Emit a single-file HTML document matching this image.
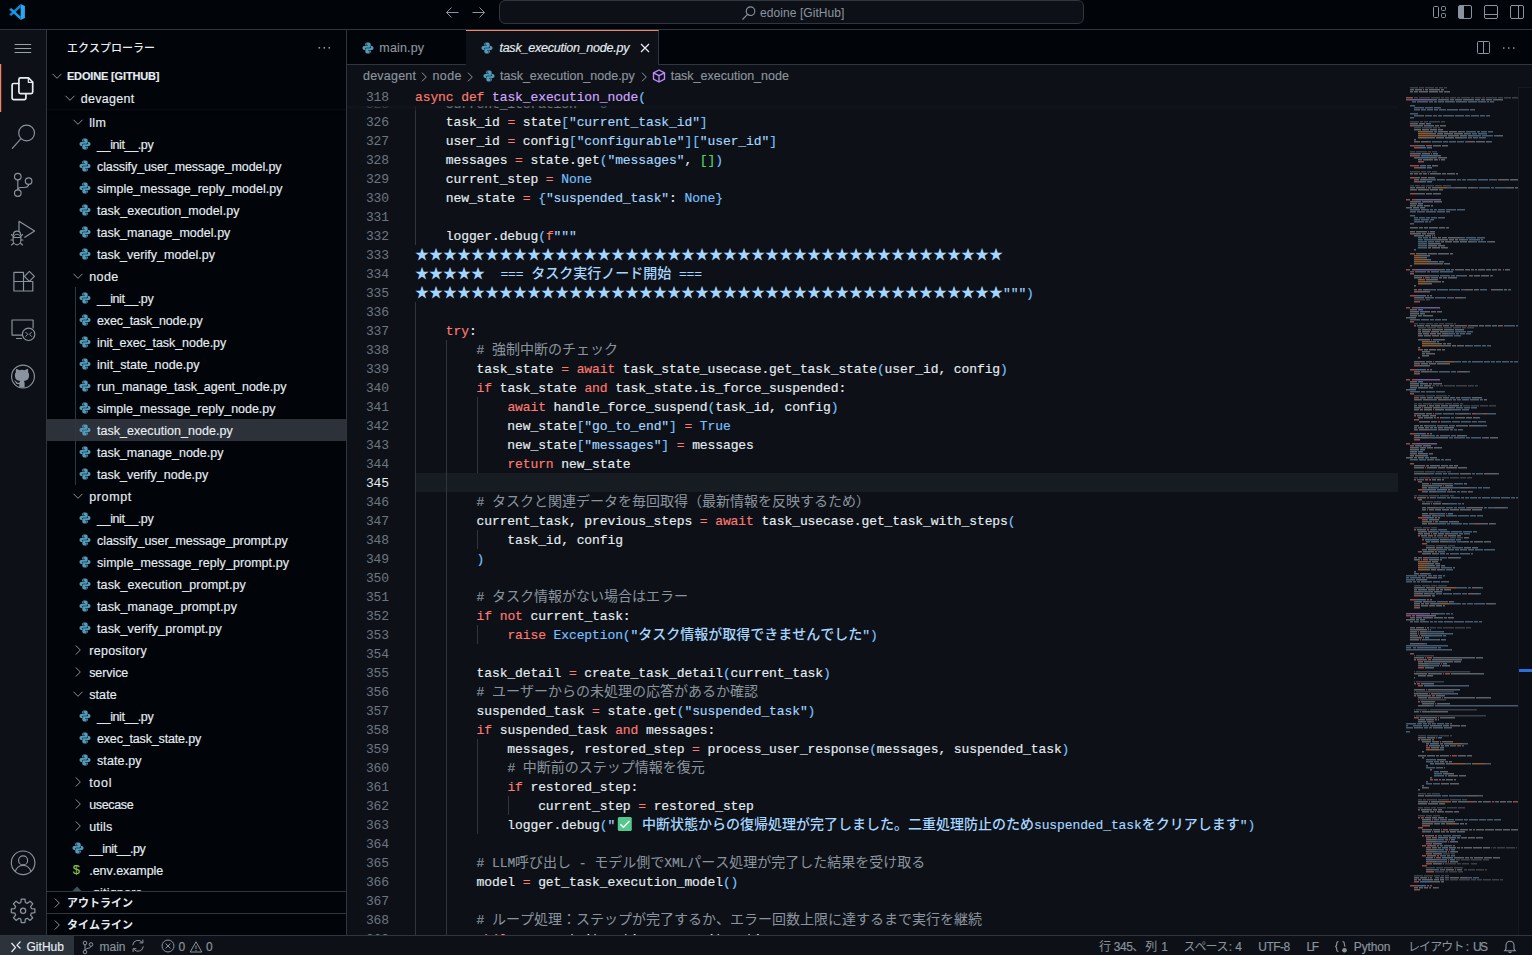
<!DOCTYPE html><html><head><meta charset="utf-8"><title>VS Code</title><style>
*{box-sizing:border-box;margin:0;padding:0}
html,body{width:1532px;height:955px;overflow:hidden;background:#0d1117}
body{font-family:"Liberation Sans",sans-serif;font-size:13px;color:#e6edf3;position:relative;font-kerning:none;-webkit-font-smoothing:antialiased}
.abs{position:absolute}
svg{display:block}
svg.jp{display:inline-block;vertical-align:top;overflow:visible}
span.jp{font-family:"Liberation Sans","Noto Sans CJK JP",sans-serif;font-size:14px;letter-spacing:0;line-height:0;white-space:nowrap;-webkit-text-stroke:0;font-style:normal}
span.jm{font-weight:500}
span.jr{font-weight:400}
span.jb{font-weight:700}
#title{position:absolute;left:0;top:0;width:1532px;height:29px;background:#010409}
#titleb{position:absolute;left:0;top:29px;width:1532px;height:1px;background:#30363d}
#act{position:absolute;left:0;top:30px;width:46px;height:905px;background:#0d1117}
#actb{position:absolute;left:46px;top:30px;width:1px;height:905px;background:#30363d}
#side{position:absolute;left:47px;top:30px;width:299px;height:905px;background:#010409;overflow:hidden}
#sideb{position:absolute;left:346px;top:30px;width:1px;height:905px;background:#30363d}
#ed{position:absolute;left:347px;top:30px;width:1185px;height:905px;background:#0d1117;overflow:hidden}
#status{position:absolute;left:0;top:935px;width:1532px;height:22px;background:#0d1117;border-top:1px solid #30363d;color:#8b949e;font-size:12px}
.row{position:absolute;left:0;width:299px;height:22px;line-height:22px;white-space:nowrap}
.row span.t{position:absolute;top:0}
.code{position:absolute;left:68px;height:19px;line-height:19px;white-space:pre;font-family:"Liberation Mono",monospace;font-size:13px;letter-spacing:-0.104px;color:#e6edf3;-webkit-text-stroke:0.15px}
.ln{position:absolute;left:-1px;width:43px;text-align:right;height:19px;line-height:19px;font-family:"Liberation Mono",monospace;font-size:13px;letter-spacing:-0.104px;color:#6e7681}
.k{color:#ff7b72}.f{color:#d2a8ff}.s{color:#a5d6ff}.c{color:#79c0ff}.m{color:#8b949e}.b1{color:#79c0ff}.b2{color:#56d364}.b3{color:#e3b341}
.guide{position:absolute;width:1px;background:#30363d}
</style></head><body><svg width="0" height="0" style="position:absolute"><defs><g id="py"><path fill-rule="evenodd" fill="#519aba" d="M5.900 .5C4.100 .5 3.100 1.100 3.100 2.300V3.500H5.900V4H2.200C1.100 4 .5 4.900 .5 6C.5 7.200 1.100 8 2.200 8H3V7C3 6.200 3.600 5.650 4.400 5.650H7.400C8.200 5.650 8.700 5.100 8.700 4.300V2.300C8.700 1.100 7.700 .5 5.900 .5ZM4.400 1.400a.6 .6 0 1 1 0 1.200a.6 .6 0 0 1 0-1.200ZM6.100 11.500C7.900 11.500 8.900 10.900 8.900 9.700V8.500H6.100V8H9.800C10.900 8 11.500 7.100 11.500 6C11.500 4.800 10.900 4 9.800 4H9V5C9 5.800 8.400 6.350 7.600 6.350H4.600C3.800 6.350 3.300 6.900 3.300 7.700V9.700C3.300 10.900 4.300 11.500 6.100 11.500ZM7.600 9.400a.6 .6 0 1 1 0 1.200a.6 .6 0 0 1 0-1.200Z"/></g></defs></svg><div id="title"><svg class="abs" style="left:8px;top:3px" width="18" height="18" viewBox="0 0 18 18">
<path d="M12.6 0.9 L16.9 2.9 L16.9 15.1 L12.6 17.1 Z" fill="#29a9f2"/>
<path d="M12.6 0.9 L12.6 4.6 L3.2 12.9 L1.2 11.4 Z" fill="#0a8ad8"/>
<path d="M12.6 17.1 L12.6 13.4 L3.2 5.1 L1.2 6.6 Z" fill="#1a9be6"/>
</svg><svg class="abs" style="left:444px;top:4px" width="44" height="16" viewBox="0 0 44 16" fill="none" stroke="#8b949e" stroke-width="1">
<path d="M14.5 8.5H2.5M7.500 3.500L2.500 8.500L7.500 13.500"/><path d="M28.5 8.5H40.5M35.500 3.500L40.500 8.500L35.500 13.500"/></svg><div class="abs" style="left:499px;top:0px;width:585px;height:24px;border:1px solid #30363d;border-radius:6px;background:#0d1117"></div><svg class="abs" style="left:741px;top:5px" width="16" height="16" viewBox="0 0 16 16" fill="none" stroke="#8b949e" stroke-width="1.1"><circle cx="9.5" cy="6.2" r="4.3"/><path d="M6.5 9.3L1.5 14.5"/></svg><div class="abs" style="left:760px;top:2px;height:22px;line-height:22px;font-size:12px;color:#8b949e;letter-spacing:0.074px">edoine [GitHub]</div><svg class="abs" style="left:1430px;top:3px" width="100" height="20" viewBox="1430 3 100 20" fill="none" stroke="#8b949e" stroke-width="1">
<rect x="1433.5" y="6.5" width="5" height="11" rx="1"/><rect x="1441.5" y="6.5" width="4" height="4" rx="1"/><rect x="1441.5" y="13.5" width="4" height="4" rx="1"/>
<rect x="1458.5" y="5.5" width="13" height="13" rx="1.5"/><path d="M1459 6h5v12h-5z" fill="#8b949e" stroke="none"/>
<rect x="1484.5" y="5.5" width="13" height="13" rx="1.5"/><path d="M1485 14.5h12"/>
<rect x="1510.500" y="5.5" width="13" height="13" rx="1.5"/><path d="M1518.5 6v12"/>
</svg></div><div id="titleb"></div><div id="act"><svg class="abs" style="left:0;top:0" width="46" height="905" viewBox="0 30 46 905" fill="none" stroke="#8b949e" stroke-width="1.15" stroke-linecap="round" stroke-linejoin="round">
<rect x="0" y="64" width="1.2" height="48" fill="#f78166" stroke="none"/>
<path d="M14.600 44.500h16.600M14.600 48.500h16.600M14.600 52.500h16.600" stroke-width="1" stroke-linecap="butt" stroke="#9aa1a9"/>
<!-- files -->
<g stroke="#e6edf3" stroke-width="1.7">
<path d="M20.5 77.8h8l4.2 4.2v10a1.6 1.6 0 0 1 -1.600 1.6h-10.600a1.600 1.600 0 0 1 -1.600 -1.600v-12.600a1.600 1.600 0 0 1 1.600 -1.600z"/>
<path d="M28.300 78v4.300h4.300" stroke-width="1.2"/>
<path d="M18.700 83.500h-5a1.600 1.600 0 0 0 -1.600 1.600v13a1.600 1.600 0 0 0 1.600 1.600h10.600a1.600 1.600 0 0 0 1.600 -1.600v-4.300"/>
</g>
<!-- search -->
<circle cx="26.6" cy="133" r="7.900"/><path d="M20.800 138.800L12.300 148.300"/>
<!-- scm -->
<circle cx="17.800" cy="176.600" r="3.300"/><circle cx="28.600" cy="181.100" r="3.300"/><circle cx="17.800" cy="193.100" r="3.300"/>
<path d="M17.800 180v9.800M28.600 184.500c0 2.500 -2.500 3 -5 3h-2.500c-2 0 -3.300 .8 -3.300 2.300"/>
<!-- debug -->
<path d="M19 231.500V221.300L34.600 231.100L24.800 237.300"/>
<ellipse cx="17" cy="239.500" rx="4" ry="5.300"/><path d="M13 237.500h8M11.500 234.500l2 2M22.500 234.500l-2 2M11 240h2M21 240h2M11.500 245l2 -1.800M22.500 245l-2 -1.800M13.500 234.600a3.500 3.500 0 0 1 7 0"/>
<!-- extensions -->
<path d="M23.500 281.500v9.500h-9.600v-18.700h9.600v9.200h9.300v9.500h-9.300M13.900 281.500h9.600"/>
<path d="M29.400 271.300l5 5l-5 5l-5 -5z"/>
<!-- remote -->
<path d="M22 335.100h-10v-15.100h21.100v8"/><path d="M16.500 338.500h5"/>
<circle cx="28.600" cy="334.300" r="6.200"/><path d="M25.800 332.300l2 2l-2 2M31.400 332.300l-2 2l2 2" stroke-width="1"/>
<!-- github -->
<circle cx="23" cy="376.500" r="11.400"/>
<path d="M19.300 387.300v-3.200c-3 .7 -3.600 -1.400 -3.600 -1.400c-.5 -1.200 -1.200 -1.600 -1.200 -1.600c-1 -.7 .1 -.7 .1 -.7c1.100 .1 1.700 1.100 1.700 1.100c1 1.700 2.600 1.200 3.200 .9c.1 -.7 .4 -1.200 .7 -1.500c-2.600 -.3 -5.300 -1.300 -5.300 -5.700c0 -1.300 .4 -2.300 1.100 -3.100c-.1 -.3 -.5 -1.500 .1 -3.100c0 0 .9 -.3 3.100 1.200a10.600 10.600 0 0 1 5.600 0c2.200 -1.500 3.100 -1.200 3.100 -1.200c.6 1.600 .2 2.800 .1 3.100c.7 .8 1.100 1.800 1.100 3.100c0 4.400 -2.700 5.400 -5.300 5.700c.4 .4 .8 1.100 .8 2.200v4.200z" fill="#8b949e" stroke="none"/>
<!-- account -->
<circle cx="23.100" cy="862.800" r="11.800"/><circle cx="23.100" cy="860.400" r="4.500"/><path d="M15.300 871.600a8 8 0 0 1 15.600 0"/>
<!-- gear -->
<g transform="translate(23.100 910.800)" stroke-width="1.250">
<path d="M-2.27 -8.30L-1.86 -11.75L1.86 -11.75L2.27 -8.30L4.26 -7.47L6.99 -9.63L9.63 -6.99L7.47 -4.26L8.30 -2.27L11.75 -1.86L11.75 1.86L8.30 2.27L7.47 4.26L9.63 6.99L6.99 9.63L4.26 7.47L2.27 8.30L1.86 11.75L-1.86 11.75L-2.27 8.30L-4.26 7.47L-6.99 9.63L-9.63 6.99L-7.47 4.26L-8.30 2.27L-11.75 1.86L-11.75 -1.86L-8.30 -2.27L-7.47 -4.26L-9.63 -6.99L-6.99 -9.63L-4.26 -7.47Z"/>
<circle r="2.600"/>
</g>
</svg></div><div id="actb"></div><div id="side"><div class="abs" style="left:20px;top:10px;height:16px;line-height:16px;white-space:nowrap"><span class="jp jm" style="font-size:11px;color:#e6edf3">エクスプローラー</span></div><svg class="abs" style="left:270px;top:14px" width="16" height="8" viewBox="0 0 16 8" fill="#8b949e"><rect x="1.5" y="3" width="1.600" height="1.600"/><rect x="6.500" y="3" width="1.600" height="1.600"/><rect x="11.500" y="3" width="1.600" height="1.600"/></svg><div class="abs" style="left:0;top:389px;width:299px;height:22px;background:#2d3139"></div><div class="abs" style="left:28px;top:257px;width:1px;height:198px;background:#30363d"></div><svg class="abs" style="left:25px;top:86px" width="12" height="12" viewBox="-6 -6 12 12" fill="none" stroke="#8b949e" stroke-width="1"><path d="M-4.500 -2.200L0 2.300L4.500 -2.200"/></svg><div class="abs" style="left:42.2px;top:81.7px;height:22px;line-height:22px;white-space:nowrap;font-size:12.5px;color:#e6edf3;letter-spacing:0.378px;-webkit-text-stroke:0.15px;">llm</div><svg class="abs" style="left:32.400000000000006px;top:108px" width="12" height="12" viewBox="0 0 12 12"><use href="#py"/></svg><div class="abs" style="left:50px;top:103.7px;height:22px;line-height:22px;white-space:nowrap;font-size:12.5px;color:#e6edf3;letter-spacing:-0.378px;-webkit-text-stroke:0.15px;">__init__.py</div><svg class="abs" style="left:32.400000000000006px;top:130px" width="12" height="12" viewBox="0 0 12 12"><use href="#py"/></svg><div class="abs" style="left:50px;top:125.7px;height:22px;line-height:22px;white-space:nowrap;font-size:12.5px;color:#e6edf3;letter-spacing:-0.106px;-webkit-text-stroke:0.15px;">classify_user_message_model.py</div><svg class="abs" style="left:32.400000000000006px;top:152px" width="12" height="12" viewBox="0 0 12 12"><use href="#py"/></svg><div class="abs" style="left:50px;top:147.7px;height:22px;line-height:22px;white-space:nowrap;font-size:12.5px;color:#e6edf3;letter-spacing:-0.004px;-webkit-text-stroke:0.15px;">simple_message_reply_model.py</div><svg class="abs" style="left:32.400000000000006px;top:174px" width="12" height="12" viewBox="0 0 12 12"><use href="#py"/></svg><div class="abs" style="left:50px;top:169.7px;height:22px;line-height:22px;white-space:nowrap;font-size:12.5px;color:#e6edf3;letter-spacing:0.063px;-webkit-text-stroke:0.15px;">task_execution_model.py</div><svg class="abs" style="left:32.400000000000006px;top:196px" width="12" height="12" viewBox="0 0 12 12"><use href="#py"/></svg><div class="abs" style="left:50px;top:191.7px;height:22px;line-height:22px;white-space:nowrap;font-size:12.5px;color:#e6edf3;letter-spacing:0.034px;-webkit-text-stroke:0.15px;">task_manage_model.py</div><svg class="abs" style="left:32.400000000000006px;top:218px" width="12" height="12" viewBox="0 0 12 12"><use href="#py"/></svg><div class="abs" style="left:50px;top:213.7px;height:22px;line-height:22px;white-space:nowrap;font-size:12.5px;color:#e6edf3;letter-spacing:0.034px;-webkit-text-stroke:0.15px;">task_verify_model.py</div><svg class="abs" style="left:25px;top:240px" width="12" height="12" viewBox="-6 -6 12 12" fill="none" stroke="#8b949e" stroke-width="1"><path d="M-4.500 -2.200L0 2.300L4.500 -2.200"/></svg><div class="abs" style="left:42.2px;top:235.7px;height:22px;line-height:22px;white-space:nowrap;font-size:12.5px;color:#e6edf3;letter-spacing:0.398px;-webkit-text-stroke:0.15px;">node</div><svg class="abs" style="left:32.400000000000006px;top:262px" width="12" height="12" viewBox="0 0 12 12"><use href="#py"/></svg><div class="abs" style="left:50px;top:257.7px;height:22px;line-height:22px;white-space:nowrap;font-size:12.5px;color:#e6edf3;letter-spacing:-0.378px;-webkit-text-stroke:0.15px;">__init__.py</div><svg class="abs" style="left:32.400000000000006px;top:284px" width="12" height="12" viewBox="0 0 12 12"><use href="#py"/></svg><div class="abs" style="left:50px;top:279.7px;height:22px;line-height:22px;white-space:nowrap;font-size:12.5px;color:#e6edf3;letter-spacing:-0.130px;-webkit-text-stroke:0.15px;">exec_task_node.py</div><svg class="abs" style="left:32.400000000000006px;top:306px" width="12" height="12" viewBox="0 0 12 12"><use href="#py"/></svg><div class="abs" style="left:50px;top:301.7px;height:22px;line-height:22px;white-space:nowrap;font-size:12.5px;color:#e6edf3;letter-spacing:-0.070px;-webkit-text-stroke:0.15px;">init_exec_task_node.py</div><svg class="abs" style="left:32.400000000000006px;top:328px" width="12" height="12" viewBox="0 0 12 12"><use href="#py"/></svg><div class="abs" style="left:50px;top:323.7px;height:22px;line-height:22px;white-space:nowrap;font-size:12.5px;color:#e6edf3;letter-spacing:0.058px;-webkit-text-stroke:0.15px;">init_state_node.py</div><svg class="abs" style="left:32.400000000000006px;top:350px" width="12" height="12" viewBox="0 0 12 12"><use href="#py"/></svg><div class="abs" style="left:50px;top:345.7px;height:22px;line-height:22px;white-space:nowrap;font-size:12.5px;color:#e6edf3;letter-spacing:-0.012px;-webkit-text-stroke:0.15px;">run_manage_task_agent_node.py</div><svg class="abs" style="left:32.400000000000006px;top:372px" width="12" height="12" viewBox="0 0 12 12"><use href="#py"/></svg><div class="abs" style="left:50px;top:367.7px;height:22px;line-height:22px;white-space:nowrap;font-size:12.5px;color:#e6edf3;letter-spacing:-0.031px;-webkit-text-stroke:0.15px;">simple_message_reply_node.py</div><svg class="abs" style="left:32.400000000000006px;top:394px" width="12" height="12" viewBox="0 0 12 12"><use href="#py"/></svg><div class="abs" style="left:50px;top:389.7px;height:22px;line-height:22px;white-space:nowrap;font-size:12.5px;color:#e6edf3;letter-spacing:0.040px;-webkit-text-stroke:0.15px;">task_execution_node.py</div><svg class="abs" style="left:32.400000000000006px;top:416px" width="12" height="12" viewBox="0 0 12 12"><use href="#py"/></svg><div class="abs" style="left:50px;top:411.7px;height:22px;line-height:22px;white-space:nowrap;font-size:12.5px;color:#e6edf3;letter-spacing:-0.004px;-webkit-text-stroke:0.15px;">task_manage_node.py</div><svg class="abs" style="left:32.400000000000006px;top:438px" width="12" height="12" viewBox="0 0 12 12"><use href="#py"/></svg><div class="abs" style="left:50px;top:433.7px;height:22px;line-height:22px;white-space:nowrap;font-size:12.5px;color:#e6edf3;letter-spacing:0.007px;-webkit-text-stroke:0.15px;">task_verify_node.py</div><svg class="abs" style="left:25px;top:460px" width="12" height="12" viewBox="-6 -6 12 12" fill="none" stroke="#8b949e" stroke-width="1"><path d="M-4.500 -2.200L0 2.300L4.500 -2.200"/></svg><div class="abs" style="left:42.2px;top:455.7px;height:22px;line-height:22px;white-space:nowrap;font-size:12.5px;color:#e6edf3;letter-spacing:0.633px;-webkit-text-stroke:0.15px;">prompt</div><svg class="abs" style="left:32.400000000000006px;top:482px" width="12" height="12" viewBox="0 0 12 12"><use href="#py"/></svg><div class="abs" style="left:50px;top:477.7px;height:22px;line-height:22px;white-space:nowrap;font-size:12.5px;color:#e6edf3;letter-spacing:-0.378px;-webkit-text-stroke:0.15px;">__init__.py</div><svg class="abs" style="left:32.400000000000006px;top:504px" width="12" height="12" viewBox="0 0 12 12"><use href="#py"/></svg><div class="abs" style="left:50px;top:499.7px;height:22px;line-height:22px;white-space:nowrap;font-size:12.5px;color:#e6edf3;letter-spacing:-0.056px;-webkit-text-stroke:0.15px;">classify_user_message_prompt.py</div><svg class="abs" style="left:32.400000000000006px;top:526px" width="12" height="12" viewBox="0 0 12 12"><use href="#py"/></svg><div class="abs" style="left:50px;top:521.7px;height:22px;line-height:22px;white-space:nowrap;font-size:12.5px;color:#e6edf3;letter-spacing:0.054px;-webkit-text-stroke:0.15px;">simple_message_reply_prompt.py</div><svg class="abs" style="left:32.400000000000006px;top:548px" width="12" height="12" viewBox="0 0 12 12"><use href="#py"/></svg><div class="abs" style="left:50px;top:543.7px;height:22px;line-height:22px;white-space:nowrap;font-size:12.5px;color:#e6edf3;letter-spacing:0.128px;-webkit-text-stroke:0.15px;">task_execution_prompt.py</div><svg class="abs" style="left:32.400000000000006px;top:570px" width="12" height="12" viewBox="0 0 12 12"><use href="#py"/></svg><div class="abs" style="left:50px;top:565.7px;height:22px;line-height:22px;white-space:nowrap;font-size:12.5px;color:#e6edf3;letter-spacing:0.115px;-webkit-text-stroke:0.15px;">task_manage_prompt.py</div><svg class="abs" style="left:32.400000000000006px;top:592px" width="12" height="12" viewBox="0 0 12 12"><use href="#py"/></svg><div class="abs" style="left:50px;top:587.7px;height:22px;line-height:22px;white-space:nowrap;font-size:12.5px;color:#e6edf3;letter-spacing:0.125px;-webkit-text-stroke:0.15px;">task_verify_prompt.py</div><svg class="abs" style="left:25px;top:614px" width="12" height="12" viewBox="-6 -6 12 12" fill="none" stroke="#8b949e" stroke-width="1"><path d="M-2.200 -4.500L2.300 0L-2.200 4.500"/></svg><div class="abs" style="left:42.2px;top:609.7px;height:22px;line-height:22px;white-space:nowrap;font-size:12.5px;color:#e6edf3;letter-spacing:0.292px;-webkit-text-stroke:0.15px;">repository</div><svg class="abs" style="left:25px;top:636px" width="12" height="12" viewBox="-6 -6 12 12" fill="none" stroke="#8b949e" stroke-width="1"><path d="M-2.200 -4.500L2.300 0L-2.200 4.500"/></svg><div class="abs" style="left:42.2px;top:631.7px;height:22px;line-height:22px;white-space:nowrap;font-size:12.5px;color:#e6edf3;letter-spacing:-0.085px;-webkit-text-stroke:0.15px;">service</div><svg class="abs" style="left:25px;top:658px" width="12" height="12" viewBox="-6 -6 12 12" fill="none" stroke="#8b949e" stroke-width="1"><path d="M-4.500 -2.200L0 2.300L4.500 -2.200"/></svg><div class="abs" style="left:42.2px;top:653.7px;height:22px;line-height:22px;white-space:nowrap;font-size:12.5px;color:#e6edf3;letter-spacing:0.100px;-webkit-text-stroke:0.15px;">state</div><svg class="abs" style="left:32.400000000000006px;top:680px" width="12" height="12" viewBox="0 0 12 12"><use href="#py"/></svg><div class="abs" style="left:50px;top:675.7px;height:22px;line-height:22px;white-space:nowrap;font-size:12.5px;color:#e6edf3;letter-spacing:-0.378px;-webkit-text-stroke:0.15px;">__init__.py</div><svg class="abs" style="left:32.400000000000006px;top:702px" width="12" height="12" viewBox="0 0 12 12"><use href="#py"/></svg><div class="abs" style="left:50px;top:697.7px;height:22px;line-height:22px;white-space:nowrap;font-size:12.5px;color:#e6edf3;letter-spacing:-0.167px;-webkit-text-stroke:0.15px;">exec_task_state.py</div><svg class="abs" style="left:32.400000000000006px;top:724px" width="12" height="12" viewBox="0 0 12 12"><use href="#py"/></svg><div class="abs" style="left:50px;top:719.7px;height:22px;line-height:22px;white-space:nowrap;font-size:12.5px;color:#e6edf3;letter-spacing:0.116px;-webkit-text-stroke:0.15px;">state.py</div><svg class="abs" style="left:25px;top:746px" width="12" height="12" viewBox="-6 -6 12 12" fill="none" stroke="#8b949e" stroke-width="1"><path d="M-2.200 -4.500L2.300 0L-2.200 4.500"/></svg><div class="abs" style="left:42.2px;top:741.7px;height:22px;line-height:22px;white-space:nowrap;font-size:12.5px;color:#e6edf3;letter-spacing:0.687px;-webkit-text-stroke:0.15px;">tool</div><svg class="abs" style="left:25px;top:768px" width="12" height="12" viewBox="-6 -6 12 12" fill="none" stroke="#8b949e" stroke-width="1"><path d="M-2.200 -4.500L2.300 0L-2.200 4.500"/></svg><div class="abs" style="left:42.2px;top:763.7px;height:22px;line-height:22px;white-space:nowrap;font-size:12.5px;color:#e6edf3;letter-spacing:-0.337px;-webkit-text-stroke:0.15px;">usecase</div><svg class="abs" style="left:25px;top:790px" width="12" height="12" viewBox="-6 -6 12 12" fill="none" stroke="#8b949e" stroke-width="1"><path d="M-2.200 -4.500L2.300 0L-2.200 4.500"/></svg><div class="abs" style="left:42.2px;top:785.7px;height:22px;line-height:22px;white-space:nowrap;font-size:12.5px;color:#e6edf3;letter-spacing:0.234px;-webkit-text-stroke:0.15px;">utils</div><svg class="abs" style="left:24.5px;top:812px" width="12" height="12" viewBox="0 0 12 12"><use href="#py"/></svg><div class="abs" style="left:42.2px;top:807.7px;height:22px;line-height:22px;white-space:nowrap;font-size:12.5px;color:#e6edf3;letter-spacing:-0.378px;-webkit-text-stroke:0.15px;">__init__.py</div><div class="abs" style="left:25.799999999999997px;top:829px;height:22px;line-height:22px;white-space:nowrap;font-size:13px;color:#8dc149;letter-spacing:-0.030px;-webkit-text-stroke:0.15px;">$</div><div class="abs" style="left:42.2px;top:829.7px;height:22px;line-height:22px;white-space:nowrap;font-size:12.5px;color:#e6edf3;letter-spacing:-0.021px;-webkit-text-stroke:0.15px;">.env.example</div><svg class="abs" style="left:24px;top:856px" width="12" height="12" viewBox="0 0 12 12"><path d="M6 0.500L11.500 6L6 11.500L0.500 6Z" fill="#41535b"/></svg><div class="abs" style="left:42.2px;top:851.7px;height:22px;line-height:22px;white-space:nowrap;font-size:12.5px;color:#e6edf3;letter-spacing:0.208px;-webkit-text-stroke:0.15px;">.gitignore</div><div class="abs" style="left:0;top:35px;width:299px;height:44px;background:#010409;box-shadow:0 2px 3px rgba(1,4,9,.9)"></div><div class="abs" style="left:0;top:79px;width:299px;height:2px;background:linear-gradient(#0a0e14,#010409)"></div><svg class="abs" style="left:3.5px;top:40px" width="12" height="12" viewBox="-6 -6 12 12" fill="none" stroke="#8b949e" stroke-width="1"><path d="M-4.500 -2.200L0 2.300L4.500 -2.200"/></svg><div class="abs" style="left:19.900000000000006px;top:35px;height:22px;line-height:22px;white-space:nowrap;font-size:11px;font-weight:bold;color:#e6edf3;letter-spacing:-0.148px;-webkit-text-stroke:0.15px;">EDOINE [GITHUB]</div><svg class="abs" style="left:17.400000000000006px;top:62px" width="12" height="12" viewBox="-6 -6 12 12" fill="none" stroke="#8b949e" stroke-width="1"><path d="M-4.500 -2.200L0 2.300L4.500 -2.200"/></svg><div class="abs" style="left:33.7px;top:57.7px;height:22px;line-height:22px;white-space:nowrap;font-size:12.5px;color:#e6edf3;letter-spacing:0.296px;-webkit-text-stroke:0.15px;">devagent</div><div class="abs" style="left:0;top:861px;width:299px;height:22px;background:#010409;border-top:1px solid #30363d"></div><svg class="abs" style="left:4px;top:866.5px" width="12" height="12" viewBox="-6 -6 12 12" fill="none" stroke="#8b949e" stroke-width="1"><path d="M-2.200 -4.500L2.300 0L-2.200 4.500"/></svg><div class="abs" style="left:20px;top:865px;height:16px;line-height:16px;white-space:nowrap"><span class="jp jb" style="font-size:11px;color:#e6edf3">アウトライン</span></div><div class="abs" style="left:0;top:883px;width:299px;height:22px;background:#010409;border-top:1px solid #30363d"></div><svg class="abs" style="left:4px;top:888.5px" width="12" height="12" viewBox="-6 -6 12 12" fill="none" stroke="#8b949e" stroke-width="1"><path d="M-2.200 -4.500L2.300 0L-2.200 4.500"/></svg><div class="abs" style="left:20px;top:887px;height:16px;line-height:16px;white-space:nowrap"><span class="jp jb" style="font-size:11px;color:#e6edf3">タイムライン</span></div></div><div id="sideb"></div><div id="ed"><div class="abs" style="left:0;top:0;width:1185px;height:35px;background:#010409;border-bottom:1px solid #30363d"></div><div class="abs" style="left:119px;top:0;width:1px;height:35px;background:#30363d"></div><div class="abs" style="left:119px;top:0;width:193px;height:35px;background:#0d1117;border-top:1px solid #f78166;border-right:1px solid #30363d"></div><svg class="abs" style="left:14.5px;top:12px" width="12" height="12" viewBox="0 0 12 12"><use href="#py"/></svg><div class="abs" style="left:32.30000000000001px;top:7px;height:22px;line-height:22px;white-space:nowrap;font-size:12.5px;color:#8b949e;letter-spacing:0.176px;-webkit-text-stroke:0.15px;">main.py</div><svg class="abs" style="left:134.2px;top:12px" width="12" height="12" viewBox="0 0 12 12"><use href="#py"/></svg><div class="abs" style="left:152.39999999999998px;top:7px;height:22px;line-height:22px;white-space:nowrap;font-size:12.5px;font-style:italic;color:#e6edf3;letter-spacing:-0.224px;-webkit-text-stroke:0.15px;">task_execution_node.py</div><svg class="abs" style="left:292.5px;top:13px" width="10" height="10" viewBox="0 0 10 10" stroke="#e6edf3" stroke-width="1.200"><path d="M1 1L9 9M9 1L1 9"/></svg><svg class="abs" style="left:1129px;top:10px" width="42" height="16" viewBox="1476 40 42 16" fill="none" stroke="#8b949e" stroke-width="1"><rect x="1477.500" y="41.500" width="12" height="12" rx="1"/><path d="M1483.500 41.500v12"/><g fill="#8b949e" stroke="none"><rect x="1503" y="47.300" width="1.500" height="1.500"/><rect x="1508" y="47.300" width="1.500" height="1.500"/><rect x="1513" y="47.300" width="1.500" height="1.500"/></g></svg><div class="abs" style="left:16px;top:35px;height:22px;line-height:22px;white-space:nowrap;font-size:12.5px;color:#8b949e;letter-spacing:0.221px;-webkit-text-stroke:0.15px;">devagent</div><svg class="abs" style="left:72.30000000000001px;top:41px" width="10" height="12" viewBox="-5 -6 10 12" fill="none" stroke="#8b949e" stroke-width="1"><path d="M-2 -4.300L2.300 0L-2 4.300"/></svg><div class="abs" style="left:85.5px;top:35px;height:22px;line-height:22px;white-space:nowrap;font-size:12.5px;color:#8b949e;letter-spacing:0.398px;-webkit-text-stroke:0.15px;">node</div><svg class="abs" style="left:118px;top:41px" width="10" height="12" viewBox="-5 -6 10 12" fill="none" stroke="#8b949e" stroke-width="1"><path d="M-2 -4.300L2.300 0L-2 4.300"/></svg><svg class="abs" style="left:135.60000000000002px;top:40px" width="12" height="12" viewBox="0 0 12 12"><use href="#py"/></svg><div class="abs" style="left:153px;top:35px;height:22px;line-height:22px;white-space:nowrap;font-size:12.5px;color:#8b949e;letter-spacing:-0.001px;-webkit-text-stroke:0.15px;">task_execution_node.py</div><svg class="abs" style="left:291.70000000000005px;top:41px" width="10" height="12" viewBox="-5 -6 10 12" fill="none" stroke="#8b949e" stroke-width="1"><path d="M-2 -4.300L2.300 0L-2 4.300"/></svg><svg class="abs" style="left:305.29999999999995px;top:39px" width="14" height="14" viewBox="0 0 14 14" fill="none" stroke="#bc8cff" stroke-width="1.350" stroke-linejoin="round"><path d="M7 1L12.500 3.800V10.200L7 13L1.500 10.200V3.800ZM1.500 3.800L7 6.600L12.500 3.800M7 6.600V13"/></svg><div class="abs" style="left:323.70000000000005px;top:35px;height:22px;line-height:22px;white-space:nowrap;font-size:12.5px;color:#8b949e;letter-spacing:0.003px;-webkit-text-stroke:0.15px;">task_execution_node</div><div class="abs" style="left:0;top:76px;width:1051px;height:3px;background:linear-gradient(#181d24,#10141a)"></div><div class="abs" style="left:68px;top:443px;width:983px;height:19px;background:#171b22"></div><div class="guide" style="left:68px;top:63px;height:152px"></div><div class="guide" style="left:68px;top:272px;height:646px"></div><div class="guide" style="left:99px;top:310px;height:608px"></div><div class="guide" style="left:130px;top:367px;height:76px"></div><div class="guide" style="left:130px;top:500px;height:19px"></div><div class="guide" style="left:130px;top:595px;height:19px"></div><div class="guide" style="left:130px;top:709px;height:95px"></div><div class="guide" style="left:161px;top:766px;height:19px"></div><div class="ln" style="top:65px">325</div><div class="code" style="top:65px">    current_iteration <span class="k">=</span> <span class="c">0</span></div><div class="ln" style="top:83px">326</div><div class="code" style="top:83px">    task_id <span class="k">=</span> state<span class="b1">[</span><span class="s">&quot;current_task_id&quot;</span><span class="b1">]</span></div><div class="ln" style="top:102px">327</div><div class="code" style="top:102px">    user_id <span class="k">=</span> config<span class="b1">[</span><span class="s">&quot;configurable&quot;</span><span class="b1">][</span><span class="s">&quot;user_id&quot;</span><span class="b1">]</span></div><div class="ln" style="top:121px">328</div><div class="code" style="top:121px">    messages <span class="k">=</span> state.get<span class="b1">(</span><span class="s">&quot;messages&quot;</span>, <span class="b2">[]</span><span class="b1">)</span></div><div class="ln" style="top:140px">329</div><div class="code" style="top:140px">    current_step <span class="k">=</span> <span class="c">None</span></div><div class="ln" style="top:159px">330</div><div class="code" style="top:159px">    new_state <span class="k">=</span> <span class="b1">{</span><span class="s">&quot;suspended_task&quot;</span>: <span class="c">None</span><span class="b1">}</span></div><div class="ln" style="top:178px">331</div><div class="ln" style="top:197px">332</div><div class="code" style="top:197px">    logger.debug<span class="b1">(</span><span class="k">f</span><span class="s">&quot;&quot;&quot;</span></div><div class="ln" style="top:216px">333</div><div class="code" style="top:216px"><span class="jp jm" style="color:#a5d6ff">★★★★★★★★★★★★★★★★★★★★★★★★★★★★★★★★★★★★★★★★★★</span></div><div class="ln" style="top:235px">334</div><div class="code" style="top:235px"><span class="jp jm" style="color:#a5d6ff">★★★★★</span><span class="s">  === </span><span class="jp jm" style="color:#a5d6ff">タスク実行ノード開始</span><span class="s"> ===</span></div><div class="ln" style="top:254px">335</div><div class="code" style="top:254px"><span class="jp jm" style="color:#a5d6ff">★★★★★★★★★★★★★★★★★★★★★★★★★★★★★★★★★★★★★★★★★★</span><span class="s">&quot;&quot;&quot;</span><span class="b1">)</span></div><div class="ln" style="top:273px">336</div><div class="ln" style="top:292px">337</div><div class="code" style="top:292px">    <span class="k">try</span>:</div><div class="ln" style="top:311px">338</div><div class="code" style="top:311px">        <span class="m"># </span><span class="jp jr" style="color:#8b949e">強制中断のチェック</span></div><div class="ln" style="top:330px">339</div><div class="code" style="top:330px">        task_state <span class="k">=</span> <span class="k">await</span> task_state_usecase.get_task_state<span class="b1">(</span>user_id, config<span class="b1">)</span></div><div class="ln" style="top:349px">340</div><div class="code" style="top:349px">        <span class="k">if</span> task_state <span class="k">and</span> task_state.is_force_suspended:</div><div class="ln" style="top:368px">341</div><div class="code" style="top:368px">            <span class="k">await</span> handle_force_suspend<span class="b1">(</span>task_id, config<span class="b1">)</span></div><div class="ln" style="top:387px">342</div><div class="code" style="top:387px">            new_state<span class="b1">[</span><span class="s">&quot;go_to_end&quot;</span><span class="b1">]</span> <span class="k">=</span> <span class="c">True</span></div><div class="ln" style="top:406px">343</div><div class="code" style="top:406px">            new_state<span class="b1">[</span><span class="s">&quot;messages&quot;</span><span class="b1">]</span> <span class="k">=</span> messages</div><div class="ln" style="top:425px">344</div><div class="code" style="top:425px">            <span class="k">return</span> new_state</div><div class="ln" style="top:444px;color:#e6edf3">345</div><div class="ln" style="top:463px">346</div><div class="code" style="top:463px">        <span class="m"># </span><span class="jp jr" style="color:#8b949e">タスクと関連データを毎回取得（最新情報を反映するため）</span></div><div class="ln" style="top:482px">347</div><div class="code" style="top:482px">        current_task, previous_steps <span class="k">=</span> <span class="k">await</span> task_usecase.get_task_with_steps<span class="b1">(</span></div><div class="ln" style="top:501px">348</div><div class="code" style="top:501px">            task_id, config</div><div class="ln" style="top:520px">349</div><div class="code" style="top:520px">        <span class="b1">)</span></div><div class="ln" style="top:539px">350</div><div class="ln" style="top:558px">351</div><div class="code" style="top:558px">        <span class="m"># </span><span class="jp jr" style="color:#8b949e">タスク情報がない場合はエラー</span></div><div class="ln" style="top:577px">352</div><div class="code" style="top:577px">        <span class="k">if</span> <span class="k">not</span> current_task:</div><div class="ln" style="top:596px">353</div><div class="code" style="top:596px">            <span class="k">raise</span> <span class="c">Exception</span><span class="b1">(</span><span class="s">&quot;</span><span class="jp jm" style="color:#a5d6ff">タスク情報が取得できませんでした</span><span class="s">&quot;</span><span class="b1">)</span></div><div class="ln" style="top:615px">354</div><div class="ln" style="top:634px">355</div><div class="code" style="top:634px">        task_detail <span class="k">=</span> create_task_detail<span class="b1">(</span>current_task<span class="b1">)</span></div><div class="ln" style="top:653px">356</div><div class="code" style="top:653px">        <span class="m"># </span><span class="jp jr" style="color:#8b949e">ユーザーからの未処理の応答があるか確認</span></div><div class="ln" style="top:672px">357</div><div class="code" style="top:672px">        suspended_task <span class="k">=</span> state.get<span class="b1">(</span><span class="s">&quot;suspended_task&quot;</span><span class="b1">)</span></div><div class="ln" style="top:691px">358</div><div class="code" style="top:691px">        <span class="k">if</span> suspended_task <span class="k">and</span> messages:</div><div class="ln" style="top:710px">359</div><div class="code" style="top:710px">            messages, restored_step <span class="k">=</span> process_user_response<span class="b1">(</span>messages, suspended_task<span class="b1">)</span></div><div class="ln" style="top:729px">360</div><div class="code" style="top:729px">            <span class="m"># </span><span class="jp jr" style="color:#8b949e">中断前のステップ情報を復元</span></div><div class="ln" style="top:748px">361</div><div class="code" style="top:748px">            <span class="k">if</span> restored_step:</div><div class="ln" style="top:767px">362</div><div class="code" style="top:767px">                current_step <span class="k">=</span> restored_step</div><div class="ln" style="top:786px">363</div><div class="code" style="top:786px">            logger.debug<span class="b1">(</span><span class="s">&quot;</span><svg class="jp" width="19.1" height="19" viewBox="0 0 19.1 19"><rect x="2.800" y="1" width="14" height="14" rx="1.500" fill="#52c98b"/><path d="M5.300 8.300l3.200 3l6 -6.300" fill="none" stroke="#fff" stroke-width="1.500"/></svg><span class="s"> </span><span class="jp jm" style="color:#a5d6ff">中断状態からの復帰処理が完了しました。二重処理防止のため</span><span class="s">suspended_task</span><span class="jp jm" style="color:#a5d6ff">をクリアします</span><span class="s">&quot;</span><span class="b1">)</span></div><div class="ln" style="top:805px">364</div><div class="ln" style="top:824px">365</div><div class="code" style="top:824px">        <span class="m"># LLM</span><span class="jp jr" style="color:#8b949e">呼び出し</span><span class="m"> - </span><span class="jp jr" style="color:#8b949e">モデル側で</span><span class="m">XML</span><span class="jp jr" style="color:#8b949e">パース処理が完了した結果を受け取る</span></div><div class="ln" style="top:843px">366</div><div class="code" style="top:843px">        model <span class="k">=</span> get_task_execution_model<span class="b1">()</span></div><div class="ln" style="top:862px">367</div><div class="ln" style="top:881px">368</div><div class="code" style="top:881px">        <span class="m"># </span><span class="jp jr" style="color:#8b949e">ループ処理：ステップが完了するか、エラー回数上限に達するまで実行を継続</span></div><div class="ln" style="top:900px">369</div><div class="code" style="top:900px">        <span class="k">while</span> current_iteration <span class="k">&lt;</span> max_iterations:</div><div class="abs" style="left:0;top:57px;width:1051px;height:19px;background:#0d1117"></div><div class="ln" style="top:58px">318</div><div class="code" style="top:58px"><span class="k">async</span> <span class="k">def</span> <span class="f">task_execution_node</span><span class="b1">(</span></div><div class="abs" style="left:0;top:76px;width:1051px;height:5px;background:linear-gradient(rgba(13,17,23,.65),rgba(13,17,23,.35))"></div><svg class="abs" style="left:0;top:0" width="1185" height="905" viewBox="0 0 1185 905" fill="none" stroke-width="1.400"><path stroke="#e6edf3" stroke-opacity="0.37" d="M1063 59.7h4M1068 59.7h7M1078 59.7h3M1082 59.7h11M1094 59.7h3M1063 61.7h3M1067 61.7h4M1072 61.7h9M1082 61.7h9M1092 61.7h4M1097 61.7h6M1059 67.7h2M1085 69.7h5M1091 69.7h11M1103 69.7h4M1108 69.7h7M1116 69.7h11M1128 69.7h5M1134 69.7h4M1139 69.7h6M1146 69.7h10M1063 93.7h8M1072 93.7h5M1066 95.7h10M1077 95.7h10M1088 95.7h4M1093 95.7h6M1067 99.7h7M1075 99.7h6M1083 99.7h7M1091 99.7h5M1078 101.7h8M1087 101.7h3M1091 101.7h10M1102 101.7h8M1111 101.7h3M1084 103.7h5M1090 103.7h6M1097 103.7h9M1107 103.7h9M1117 103.7h3M1091 105.7h9M1101 105.7h11M1113 105.7h7M1121 105.7h4M1150 105.7h6M1079 107.7h9M1089 107.7h8M1098 107.7h9M1108 107.7h7M1067 109.7h2M1067 111.7h6M1074 111.7h6M1123 111.7h5M1129 111.7h9M1139 111.7h4M1069 115.7h9M1086 115.7h8M1095 115.7h6M1063 123.7h11M1075 123.7h8M1067 125.7h3M1083 125.7h11M1081 127.7h9M1091 127.7h9M1071 129.7h4M1076 129.7h10M1087 129.7h4M1094 129.7h4M1069 135.7h3M1073 135.7h6M1080 135.7h4M1085 135.7h6M1063 143.7h3M1067 143.7h4M1072 143.7h3M1076 143.7h4M1083 143.7h11M1095 143.7h4M1100 143.7h8M1109 143.7h2M1069 147.7h4M1074 147.7h6M1081 147.7h7M1067 149.7h5M1073 149.7h7M1152 149.7h10M1163 149.7h8M1063 157.7h5M1069 157.7h9M1081 157.7h3M1085 157.7h7M1109 157.7h11M1121 157.7h4M1160 157.7h7M1168 157.7h3M1063 159.7h7M1071 159.7h11M1083 159.7h8M1092 159.7h4M1070 163.7h8M1079 163.7h6M1086 163.7h8M1063 171.7h11M1075 171.7h11M1087 171.7h8M1063 173.7h7M1063 175.7h6M1070 175.7h6M1077 175.7h6M1084 175.7h2M1059 177.7h6M1066 177.7h6M1073 177.7h5M1063 197.7h8M1072 197.7h4M1077 197.7h4M1082 197.7h9M1092 197.7h6M1099 197.7h3M1063 201.7h5M1069 201.7h11M1066 203.7h8M1075 203.7h4M1080 203.7h8M1067 205.7h10M1078 205.7h6M1087 205.7h1M1085 207.7h5M1091 207.7h3M1095 207.7h5M1101 207.7h12M1090 209.7h11M1102 209.7h5M1108 209.7h3M1112 209.7h5M1094 211.7h3M1098 211.7h7M1106 211.7h6M1113 211.7h7M1121 211.7h3M1143 211.7h5M1081 213.7h13M1081 215.7h9M1091 215.7h7M1081 217.7h3M1085 217.7h8M1094 217.7h7M1067 219.7h2M1069 223.7h11M1081 223.7h9M1091 223.7h11M1103 223.7h3M1074 225.7h9M1073 227.7h7M1080 231.7h11M1092 231.7h5M1085 233.7h11M1097 233.7h6M1063 235.7h2M1090 239.7h8M1104 239.7h3M1108 239.7h9M1118 239.7h5M1124 239.7h3M1128 239.7h2M1131 239.7h7M1139 239.7h5M1145 239.7h5M1151 239.7h3M1158 239.7h5M1067 245.7h13M1123 245.7h3M1127 245.7h6M1134 245.7h8M1067 247.7h8M1084 247.7h7M1092 247.7h3M1096 247.7h4M1101 247.7h9M1083 249.7h8M1084 251.7h10M1095 251.7h2M1078 253.7h7M1067 255.7h2M1067 259.7h3M1071 259.7h4M1076 259.7h4M1119 259.7h7M1127 259.7h5M1145 259.7h11M1157 259.7h3M1074 261.7h9M1083 265.7h2M1067 267.7h10M1078 267.7h2M1109 267.7h7M1063 279.7h7M1063 281.7h9M1073 281.7h10M1084 281.7h5M1090 281.7h5M1063 283.7h9M1063 285.7h7M1071 285.7h4M1076 285.7h10M1059 287.7h10M1070 295.7h7M1078 295.7h5M1084 295.7h8M1096 295.7h6M1103 295.7h4M1108 295.7h9M1121 295.7h10M1132 295.7h5M1138 295.7h6M1145 295.7h5M1151 295.7h3M1071 299.7h3M1075 299.7h8M1085 299.7h11M1097 299.7h10M1108 299.7h9M1071 301.7h3M1075 301.7h7M1084 301.7h8M1093 301.7h7M1071 303.7h4M1076 303.7h6M1083 303.7h5M1090 303.7h4M1095 303.7h6M1071 305.7h5M1077 305.7h6M1085 305.7h7M1093 305.7h8M1071 309.7h12M1086 309.7h12M1081 311.7h8M1090 311.7h2M1088 313.7h7M1096 313.7h3M1100 313.7h4M1095 315.7h9M1105 315.7h4M1110 315.7h7M1118 315.7h4M1071 317.7h2M1077 319.7h4M1082 319.7h7M1090 319.7h4M1095 319.7h3M1075 321.7h8M1075 323.7h3M1079 323.7h9M1075 325.7h7M1071 327.7h2M1067 331.7h11M1079 331.7h6M1088 331.7h10M1067 333.7h6M1074 333.7h7M1082 333.7h7M1090 333.7h13M1074 335.7h9M1083 339.7h2M1067 341.7h6M1074 341.7h6M1113 341.7h7M1063 351.7h7M1063 353.7h9M1073 353.7h8M1082 353.7h3M1086 353.7h9M1063 355.7h9M1077 355.7h7M1063 357.7h7M1071 357.7h10M1082 357.7h4M1059 359.7h5M1073 367.7h6M1080 367.7h6M1087 367.7h8M1096 367.7h6M1103 367.7h5M1109 367.7h4M1125 367.7h10M1067 369.7h8M1076 369.7h4M1092 369.7h7M1137 369.7h3M1067 375.7h3M1071 375.7h8M1082 375.7h5M1088 375.7h5M1094 375.7h7M1102 375.7h10M1113 375.7h2M1067 377.7h7M1077 377.7h8M1086 377.7h7M1102 377.7h3M1067 379.7h5M1073 379.7h3M1077 379.7h8M1088 379.7h9M1098 379.7h6M1067 383.7h11M1079 383.7h6M1113 383.7h7M1070 385.7h4M1075 385.7h7M1083 385.7h6M1071 387.7h5M1077 387.7h9M1087 387.7h2M1111 387.7h7M1119 387.7h6M1126 387.7h6M1072 391.7h11M1084 391.7h6M1067 395.7h5M1073 395.7h3M1077 395.7h2M1110 395.7h11M1122 395.7h8M1067 397.7h3M1071 397.7h6M1078 397.7h4M1083 397.7h3M1087 397.7h3M1091 397.7h5M1097 397.7h10M1067 399.7h4M1072 399.7h7M1083 403.7h2M1067 405.7h6M1074 405.7h6M1111 405.7h7M1067 407.7h13M1093 407.7h8M1139 407.7h3M1143 407.7h8M1063 415.7h4M1068 415.7h7M1076 415.7h8M1063 417.7h9M1073 417.7h6M1080 417.7h6M1087 417.7h8M1063 419.7h9M1073 419.7h5M1063 421.7h7M1063 423.7h7M1071 423.7h10M1082 423.7h4M1063 425.7h4M1068 425.7h7M1059 427.7h7M1067 427.7h3M1071 427.7h6M1078 427.7h4M1083 427.7h7M1067 435.7h10M1079 435.7h3M1083 435.7h10M1094 435.7h7M1102 435.7h4M1107 435.7h4M1067 437.7h10M1080 437.7h10M1091 437.7h7M1099 437.7h11M1111 437.7h9M1067 443.7h13M1114 443.7h10M1138 443.7h12M1085 449.7h4M1090 449.7h4M1095 449.7h2M1075 453.7h7M1088 453.7h11M1075 455.7h10M1094 455.7h1M1098 455.7h8M1075 457.7h5M1081 457.7h7M1094 457.7h10M1114 457.7h8M1104 459.7h1M1075 461.7h6M1082 461.7h6M1122 461.7h2M1070 467.7h9M1083 467.7h1M1102 467.7h1M1116 467.7h1M1129 467.7h1M1152 467.7h1M1075 473.7h8M1086 473.7h8M1095 473.7h6M1075 477.7h4M1080 477.7h8M1122 477.7h7M1130 477.7h6M1149 477.7h9M1075 479.7h4M1082 479.7h5M1088 479.7h6M1095 479.7h7M1103 479.7h9M1113 479.7h11M1125 479.7h10M1075 483.7h6M1082 483.7h5M1097 483.7h1M1075 485.7h9M1085 485.7h3M1091 487.7h2M1082 489.7h10M1075 491.7h10M1088 491.7h3M1092 491.7h9M1102 491.7h10M1075 493.7h5M1081 493.7h7M1131 493.7h10M1142 493.7h5M1070 499.7h9M1071 501.7h9M1081 501.7h3M1071 503.7h5M1077 503.7h6M1086 503.7h4M1091 503.7h6M1098 503.7h3M1115 503.7h1M1074 505.7h6M1081 505.7h5M1101 505.7h8M1110 505.7h4M1117 507.7h5M1088 509.7h4M1093 509.7h7M1079 511.7h4M1084 511.7h8M1093 511.7h8M1116 511.7h6M1123 511.7h3M1127 511.7h9M1137 511.7h7M1079 517.7h9M1089 517.7h7M1097 517.7h4M1117 517.7h7M1125 517.7h6M1075 519.7h5M1081 519.7h7M1076 521.7h11M1075 523.7h9M1085 523.7h3M1067 527.7h3M1071 527.7h4M1076 527.7h4M1102 527.7h10M1067 529.7h6M1082 529.7h10M1093 529.7h2M1080 531.7h4M1085 531.7h6M1082 533.7h5M1088 533.7h5M1077 535.7h11M1089 535.7h4M1094 535.7h4M1079 537.7h10M1080 539.7h3M1084 539.7h5M1090 539.7h5M1067 541.7h2M1067 543.7h5M1073 543.7h7M1080 547.7h10M1073 549.7h7M1067 557.7h11M1079 557.7h8M1089 557.7h10M1126 557.7h8M1067 559.7h3M1071 559.7h9M1081 559.7h7M1089 559.7h3M1093 559.7h3M1097 559.7h7M1067 561.7h6M1084 561.7h1M1087 561.7h8M1067 563.7h9M1077 563.7h3M1122 563.7h10M1074 565.7h10M1085 565.7h3M1083 569.7h2M1067 571.7h8M1076 571.7h4M1103 571.7h3M1067 573.7h6M1074 573.7h3M1078 573.7h3M1083 573.7h10M1140 573.7h7M1067 575.7h6M1074 575.7h7M1082 575.7h6M1089 575.7h6M1096 575.7h2M1077 583.7h6M1084 583.7h7M1063 587.7h5M1069 587.7h6M1076 587.7h10M1087 587.7h9M1097 587.7h3M1101 587.7h6M1059 589.7h9M1069 589.7h3M1073 589.7h5M1063 597.7h5M1069 597.7h8M1063 599.7h17M1063 601.7h7M1073 601.7h5M1063 603.7h7M1073 603.7h6M1063 605.7h8M1074 605.7h9M1094 605.7h1M1063 607.7h12M1063 609.7h9M1092 609.7h1M1063 613.7h12M1066 623.7h1M1067 627.7h10M1086 627.7h33M1120 627.7h8M1129 627.7h6M1070 629.7h10M1085 629.7h30M1077 631.7h20M1098 631.7h8M1107 631.7h6M1071 633.7h9M1071 635.7h9M1095 635.7h8M1078 637.7h9M1067 643.7h13M1081 643.7h14M1104 643.7h32M1071 645.7h8M1080 645.7h6M1074 653.7h13M1067 659.7h11M1081 659.7h18M1100 659.7h12M1067 663.7h14M1084 663.7h9M1070 665.7h14M1089 665.7h9M1071 667.7h9M1081 667.7h13M1097 667.7h21M1119 667.7h9M1129 667.7h14M1074 671.7h14M1075 673.7h12M1090 673.7h13M1071 675.7h12M1067 681.7h5M1075 681.7h24M1073 687.7h17M1093 687.7h15M1071 689.7h7M1079 689.7h8M1071 691.7h8M1080 691.7h3M1084 695.7h11M1096 695.7h5M1104 695.7h9M1114 695.7h4M1071 707.7h8M1080 707.7h8M1074 709.7h10M1085 709.7h2M1075 711.7h9M1085 711.7h7M1095 711.7h11M1079 713.7h3M1083 713.7h9M1093 713.7h3M1097 713.7h6M1089 715.7h4M1094 715.7h3M1098 715.7h4M1084 717.7h8M1093 717.7h4M1075 721.7h2M1071 725.7h8M1080 725.7h8M1089 725.7h3M1093 725.7h9M1111 725.7h8M1120 725.7h5M1075 727.7h2M1090 729.7h9M1093 731.7h4M1098 731.7h3M1102 731.7h3M1083 733.7h4M1088 733.7h10M1099 733.7h6M1123 733.7h1M1079 735.7h2M1095 737.7h1M1097 737.7h1M1083 739.7h2M1093 741.7h8M1096 743.7h11M1101 745.7h10M1112 745.7h7M1083 747.7h2M1087 749.7h4M1095 749.7h3M1099 749.7h7M1107 749.7h2M1079 751.7h2M1094 753.7h8M1103 753.7h9M1075 755.7h2M1075 757.7h7M1071 759.7h2M1071 765.7h6M1078 765.7h6M1121 765.7h9M1071 771.7h10M1084 771.7h10M1105 771.7h5M1111 771.7h11M1126 771.7h4M1131 771.7h4M1136 771.7h7M1148 771.7h4M1153 771.7h6M1160 771.7h5M1071 773.7h9M1081 773.7h10M1092 773.7h6M1074 779.7h11M1086 779.7h4M1091 779.7h4M1075 781.7h7M1083 781.7h4M1090 781.7h7M1098 781.7h8M1107 781.7h5M1078 787.7h6M1085 787.7h5M1091 787.7h6M1098 787.7h2M1075 789.7h9M1075 791.7h13M1096 791.7h10M1075 793.7h11M1087 793.7h6M1094 793.7h4M1099 793.7h2M1109 793.7h3M1113 793.7h4M1118 793.7h2M1075 799.7h10M1086 799.7h7M1102 799.7h10M1113 799.7h8M1122 799.7h3M1126 799.7h2M1129 799.7h8M1138 799.7h9M1148 799.7h7M1156 799.7h7M1164 799.7h7M1075 801.7h9M1087 801.7h6M1094 801.7h4M1099 801.7h3M1103 801.7h6M1110 801.7h8M1078 805.7h9M1085 807.7h5M1091 807.7h10M1102 807.7h7M1110 807.7h3M1114 807.7h6M1121 807.7h7M1129 807.7h7M1079 809.7h10M1100 809.7h1M1079 811.7h10M1099 811.7h1M1103 811.7h8M1086 813.7h9M1080 815.7h9M1085 817.7h5M1091 817.7h3M1095 817.7h6M1102 817.7h7M1110 817.7h3M1114 817.7h2M1117 817.7h8M1126 817.7h9M1136 817.7h7M1079 819.7h10M1100 819.7h1M1079 821.7h10M1099 821.7h1M1103 821.7h8M1086 823.7h9M1080 825.7h9M1079 827.7h7M1095 827.7h11M1107 827.7h10M1118 827.7h4M1123 827.7h3M1127 827.7h9M1137 827.7h8M1146 827.7h7M1079 829.7h10M1099 829.7h1M1079 831.7h10M1099 831.7h1M1103 831.7h8M1086 833.7h9M1079 839.7h6M1096 839.7h1M1099 839.7h8M1110 839.7h5M1067 847.7h5M1073 847.7h7M1104 847.7h8M1113 847.7h6M1067 849.7h3M1071 849.7h3M1075 849.7h11M1087 849.7h5M1093 849.7h3M1082 851.7h11M1094 851.7h3M1083 855.7h2M1067 857.7h4M1072 857.7h4M1077 857.7h3"/><path stroke="#ff7b72" stroke-opacity="0.55" d="M1076 59.7h1M1061 67.7h5M1059 69.7h4M1077 93.7h1M1063 95.7h3M1081 99.7h1M1080 111.7h1M1121 111.7h2M1063 115.7h6M1079 115.7h6M1067 117.7h7M1084 123.7h1M1063 125.7h4M1070 125.7h3M1067 127.7h3M1092 129.7h1M1071 131.7h6M1063 135.7h6M1067 137.7h7M1081 143.7h1M1063 147.7h6M1080 149.7h1M1151 149.7h1M1067 151.7h7M1079 157.7h1M1099 157.7h1M1108 157.7h1M1125 157.7h1M1159 157.7h1M1063 163.7h7M1059 169.7h4M1065 169.7h4M1081 201.7h1M1063 203.7h3M1085 205.7h1M1063 223.7h5M1059 239.7h4M1065 239.7h4M1156 239.7h1M1063 243.7h4M1080 245.7h1M1122 245.7h1M1076 247.7h1M1078 247.7h5M1080 259.7h1M1118 259.7h1M1144 259.7h1M1067 261.7h7M1063 265.7h7M1080 265.7h2M1080 267.7h1M1108 267.7h1M1067 271.7h6M1059 277.7h4M1065 277.7h4M1063 291.7h4M1067 295.7h2M1092 295.7h3M1117 295.7h3M1154 295.7h2M1083 299.7h1M1082 301.7h1M1088 303.7h1M1083 305.7h1M1084 309.7h1M1071 319.7h5M1086 331.7h1M1106 331.7h1M1067 335.7h7M1063 339.7h7M1080 339.7h2M1080 341.7h1M1112 341.7h1M1067 343.7h6M1059 349.7h4M1065 349.7h4M1063 363.7h4M1067 367.7h5M1080 369.7h1M1091 369.7h1M1099 369.7h1M1080 375.7h1M1075 377.7h1M1086 379.7h1M1086 383.7h1M1088 383.7h1M1112 383.7h1M1120 383.7h1M1125 383.7h4M1136 383.7h4M1067 385.7h2M1090 387.7h2M1093 387.7h1M1110 387.7h1M1067 389.7h5M1091 391.7h2M1094 391.7h1M1079 395.7h1M1109 395.7h1M1079 399.7h1M1063 403.7h7M1080 403.7h2M1080 405.7h1M1110 405.7h1M1080 407.7h1M1092 407.7h1M1138 407.7h1M1067 409.7h6M1059 413.7h4M1065 413.7h4M1075 425.7h1M1063 433.7h4M1077 435.7h1M1078 437.7h1M1080 443.7h1M1113 443.7h1M1137 443.7h1M1067 449.7h2M1078 449.7h3M1082 449.7h2M1071 451.7h4M1083 453.7h1M1096 455.7h1M1088 457.7h1M1093 457.7h1M1113 457.7h1M1122 457.7h1M1071 459.7h7M1101 459.7h2M1088 461.7h1M1121 461.7h1M1067 467.7h2M1080 467.7h2M1071 469.7h4M1084 473.7h1M1088 477.7h1M1121 477.7h1M1129 477.7h1M1148 477.7h1M1080 479.7h1M1099 483.7h1M1088 485.7h1M1071 487.7h7M1088 487.7h2M1075 489.7h6M1086 491.7h1M1088 493.7h1M1128 493.7h3M1067 499.7h2M1080 499.7h2M1084 501.7h1M1084 503.7h1M1071 505.7h2M1087 505.7h2M1097 505.7h3M1075 509.7h2M1075 513.7h5M1088 519.7h1M1071 521.7h4M1088 521.7h2M1088 523.7h1M1080 527.7h1M1101 527.7h1M1074 529.7h1M1076 529.7h5M1080 543.7h1M1079 547.7h1M1072 549.7h1M1087 557.7h1M1108 557.7h1M1125 557.7h1M1085 561.7h1M1080 563.7h1M1121 563.7h1M1067 565.7h7M1063 569.7h7M1080 569.7h2M1080 571.7h1M1102 571.7h1M1081 573.7h1M1102 573.7h1M1139 573.7h1M1067 577.7h6M1059 585.7h5M1065 585.7h3M1078 597.7h1M1081 599.7h1M1071 601.7h1M1071 603.7h1M1072 605.7h1M1076 607.7h1M1073 609.7h1M1076 613.7h1M1063 623.7h3M1078 627.7h1M1080 627.7h5M1067 629.7h2M1081 629.7h3M1071 631.7h5M1094 633.7h1M1093 635.7h1M1071 637.7h6M1096 643.7h1M1098 643.7h5M1067 653.7h2M1070 653.7h3M1071 655.7h5M1079 659.7h1M1082 663.7h1M1067 665.7h2M1085 665.7h3M1095 667.7h1M1071 671.7h2M1088 673.7h1M1073 681.7h1M1067 687.7h5M1091 687.7h1M1088 689.7h2M1083 691.7h1M1083 695.7h1M1101 695.7h1M1103 695.7h1M1118 695.7h1M1089 707.7h1M1071 709.7h2M1093 711.7h1M1079 715.7h2M1079 717.7h4M1103 725.7h1M1105 725.7h5M1083 749.7h3M1092 749.7h2M1084 765.7h1M1120 765.7h1M1130 765.7h1M1082 771.7h1M1102 771.7h2M1122 771.7h4M1145 771.7h2M1166 771.7h5M1071 779.7h2M1088 781.7h1M1071 787.7h2M1074 787.7h3M1085 789.7h1M1088 791.7h1M1095 791.7h1M1075 795.7h8M1071 797.7h5M1094 799.7h1M1096 799.7h5M1085 801.7h1M1075 805.7h2M1088 805.7h2M1079 807.7h5M1102 809.7h1M1101 811.7h1M1079 813.7h6M1075 815.7h4M1090 815.7h2M1079 817.7h5M1102 819.7h1M1101 821.7h1M1079 823.7h6M1075 825.7h4M1090 825.7h2M1087 827.7h1M1089 827.7h5M1101 829.7h1M1101 831.7h1M1079 833.7h6M1096 833.7h1M1075 835.7h5M1097 839.7h1M1108 839.7h1M1079 841.7h8M1081 847.7h1M1083 847.7h1M1103 847.7h1M1119 847.7h1M1096 849.7h1M1067 851.7h5M1063 855.7h7M1080 855.7h2M1080 857.7h1M1086 857.7h3M1067 859.7h6"/><path stroke="#79c0ff" stroke-opacity="0.5" d="M1079 93.7h5M1074 117.7h5M1080 117.7h5M1086 123.7h5M1074 125.7h9M1070 127.7h11M1074 137.7h5M1080 137.7h5M1074 151.7h5M1080 151.7h5M1071 173.7h5M1083 201.7h5M1080 229.7h4M1099 239.7h4M1079 249.7h4M1070 265.7h9M1071 279.7h5M1073 283.7h5M1070 339.7h9M1071 351.7h5M1073 355.7h3M1064 359.7h5M1130 395.7h4M1070 403.7h9M1071 421.7h5M1076 425.7h5M1085 453.7h3M1117 453.7h3M1078 459.7h11M1090 459.7h10M1101 483.7h5M1078 487.7h9M1078 509.7h10M1070 569.7h9M1088 585.7h1M1080 597.7h2M1083 599.7h1M1078 601.7h1M1096 601.7h1M1079 603.7h1M1094 603.7h2M1105 603.7h1M1083 605.7h1M1098 605.7h1M1078 607.7h4M1075 609.7h1M1094 609.7h4M1098 609.7h1M1075 613.7h1M1104 619.7h1M1119 627.7h1M1135 627.7h1M1097 631.7h1M1113 631.7h1M1080 633.7h1M1092 633.7h1M1096 633.7h4M1080 635.7h1M1091 635.7h1M1136 643.7h1M1067 647.7h1M1077 655.7h9M1086 655.7h1M1121 655.7h1M1099 659.7h1M1112 659.7h1M1093 663.7h1M1110 663.7h1M1118 667.7h1M1143 667.7h1M1083 675.7h1M1099 681.7h2M1091 689.7h1M1091 707.7h4M1082 715.7h7M1104 809.7h4M1104 819.7h4M1103 829.7h5M1073 851.7h9M1070 855.7h9"/><path stroke="#a5d6ff" stroke-opacity="0.38" d="M1065 71.7h4M1070 71.7h11M1082 71.7h4M1087 71.7h3M1091 71.7h6M1098 71.7h10M1109 71.7h11M1121 71.7h9M1131 71.7h8M1140 71.7h2M1143 71.7h4M1063 75.7h5M1067 77.7h10M1078 77.7h8M1087 77.7h7M1067 79.7h6M1074 79.7h5M1080 79.7h6M1087 79.7h4M1092 79.7h7M1100 79.7h11M1112 79.7h10M1123 79.7h5M1063 83.7h8M1067 85.7h10M1078 85.7h7M1086 85.7h4M1091 85.7h4M1096 85.7h11M1108 85.7h9M1118 85.7h5M1124 85.7h8M1133 85.7h5M1139 85.7h4M1063 87.7h4M1114 101.7h4M1119 101.7h10M1130 101.7h3M1134 101.7h6M1141 101.7h5M1120 103.7h4M1125 103.7h5M1131 103.7h9M1125 105.7h9M1135 105.7h11M1147 105.7h3M1115 107.7h5M1121 107.7h4M1126 107.7h5M1132 107.7h7M1081 111.7h3M1085 111.7h10M1096 111.7h5M1102 111.7h7M1110 111.7h7M1118 111.7h3M1143 111.7h2M1081 149.7h8M1090 149.7h8M1099 149.7h10M1110 149.7h4M1115 149.7h4M1120 149.7h10M1131 149.7h10M1142 149.7h8M1100 157.7h8M1126 157.7h5M1132 157.7h11M1144 157.7h3M1148 157.7h11M1063 179.7h10M1074 179.7h8M1083 179.7h3M1087 179.7h3M1091 179.7h7M1099 179.7h10M1110 179.7h8M1063 181.7h6M1070 181.7h8M1079 181.7h10M1090 181.7h8M1099 181.7h4M1063 185.7h5M1067 187.7h4M1072 187.7h6M1079 187.7h4M1084 187.7h6M1091 187.7h7M1067 189.7h6M1074 189.7h8M1083 189.7h4M1067 191.7h10M1078 191.7h3M1082 191.7h2M1063 193.7h4M1071 207.7h4M1076 207.7h5M1082 207.7h2M1113 207.7h5M1119 207.7h10M1130 207.7h8M1071 209.7h5M1077 209.7h13M1117 209.7h4M1122 209.7h11M1134 209.7h2M1071 211.7h9M1081 211.7h6M1088 211.7h5M1124 211.7h6M1131 211.7h8M1140 211.7h3M1071 213.7h9M1071 215.7h9M1071 217.7h9M1063 241.7h4M1068 241.7h11M1080 241.7h3M1084 241.7h8M1093 241.7h13M1081 245.7h11M1093 245.7h10M1104 245.7h4M1109 245.7h11M1143 245.7h3M1081 259.7h8M1090 259.7h11M1102 259.7h11M1114 259.7h4M1133 259.7h7M1161 259.7h3M1081 267.7h6M1088 267.7h11M1100 267.7h7M1116 267.7h3M1063 289.7h10M1074 289.7h8M1083 289.7h4M1088 289.7h6M1095 289.7h5M1157 295.7h11M1169 295.7h2M1100 301.7h7M1108 301.7h11M1120 301.7h6M1101 303.7h7M1109 303.7h3M1113 303.7h5M1119 303.7h5M1101 305.7h5M1107 305.7h7M1122 315.7h4M1127 315.7h7M1135 315.7h4M1140 315.7h4M1107 331.7h7M1115 331.7h5M1121 331.7h3M1125 331.7h11M1137 331.7h6M1144 331.7h4M1149 331.7h5M1155 331.7h7M1163 331.7h3M1167 331.7h4M1081 341.7h10M1092 341.7h11M1104 341.7h5M1110 341.7h2M1120 341.7h3M1063 361.7h10M1074 361.7h4M1079 361.7h9M1089 361.7h9M1114 367.7h10M1081 369.7h9M1100 369.7h5M1106 369.7h3M1110 369.7h4M1115 369.7h7M1123 369.7h9M1133 369.7h3M1093 377.7h9M1105 377.7h3M1109 377.7h7M1117 377.7h6M1124 377.7h6M1104 379.7h10M1115 379.7h7M1089 383.7h6M1096 383.7h11M1108 383.7h4M1121 383.7h3M1129 383.7h7M1140 383.7h9M1094 387.7h9M1104 387.7h3M1108 387.7h2M1132 387.7h1M1095 391.7h9M1105 391.7h8M1114 391.7h10M1125 391.7h5M1131 391.7h8M1080 395.7h9M1090 395.7h11M1102 395.7h6M1134 395.7h6M1080 399.7h10M1091 399.7h11M1103 399.7h3M1107 399.7h3M1111 399.7h5M1081 405.7h7M1089 405.7h3M1093 405.7h10M1104 405.7h5M1118 405.7h2M1081 407.7h11M1102 407.7h4M1107 407.7h11M1119 407.7h4M1124 407.7h10M1135 407.7h3M1063 429.7h8M1072 429.7h7M1080 429.7h7M1088 429.7h5M1094 429.7h3M1098 429.7h6M1081 443.7h6M1088 443.7h7M1096 443.7h4M1101 443.7h11M1125 443.7h3M1129 443.7h7M1150 443.7h2M1070 449.7h7M1099 453.7h7M1107 453.7h9M1085 455.7h9M1089 457.7h3M1104 457.7h9M1123 457.7h7M1131 457.7h4M1136 457.7h7M1089 461.7h10M1100 461.7h9M1110 461.7h3M1114 461.7h6M1124 461.7h2M1084 467.7h5M1090 467.7h9M1100 467.7h2M1104 467.7h9M1114 467.7h2M1118 467.7h4M1123 467.7h6M1131 467.7h3M1135 467.7h8M1144 467.7h8M1154 467.7h9M1164 467.7h4M1169 467.7h2M1101 473.7h9M1111 473.7h3M1115 473.7h2M1089 477.7h9M1099 477.7h7M1107 477.7h3M1111 477.7h7M1119 477.7h2M1137 477.7h3M1141 477.7h7M1158 477.7h3M1087 483.7h10M1089 485.7h9M1099 485.7h11M1111 485.7h11M1123 485.7h6M1130 485.7h6M1089 493.7h10M1100 493.7h3M1104 493.7h11M1116 493.7h5M1122 493.7h6M1147 493.7h2M1083 499.7h7M1091 499.7h9M1085 501.7h7M1093 501.7h10M1104 501.7h11M1116 501.7h9M1126 501.7h4M1101 503.7h10M1112 503.7h3M1117 503.7h6M1090 505.7h6M1100 509.7h8M1109 509.7h5M1101 511.7h8M1110 511.7h6M1101 517.7h3M1105 517.7h11M1089 519.7h11M1101 519.7h6M1108 519.7h4M1113 519.7h7M1121 519.7h6M1128 519.7h8M1137 519.7h11M1091 521.7h7M1089 523.7h3M1093 523.7h5M1099 523.7h3M1103 523.7h9M1113 523.7h10M1124 523.7h2M1081 527.7h11M1093 527.7h7M1112 527.7h2M1089 537.7h4M1094 537.7h11M1106 537.7h2M1095 539.7h3M1099 539.7h7M1081 543.7h3M1059 545.7h11M1071 545.7h9M1081 545.7h4M1086 545.7h4M1091 545.7h4M1096 545.7h2M1059 547.7h3M1063 547.7h11M1075 547.7h3M1091 547.7h4M1059 549.7h9M1069 549.7h3M1059 551.7h6M1066 551.7h3M1070 551.7h3M1074 551.7h11M1086 551.7h7M1094 551.7h8M1109 557.7h11M1121 557.7h3M1134 557.7h2M1073 561.7h11M1081 563.7h7M1089 563.7h6M1096 563.7h9M1106 563.7h8M1115 563.7h5M1132 563.7h2M1081 571.7h8M1090 571.7h11M1106 571.7h1M1103 573.7h11M1115 573.7h4M1120 573.7h6M1127 573.7h11M1147 573.7h2M1091 583.7h7M1099 583.7h4M1104 583.7h2M1063 591.7h3M1067 591.7h5M1073 591.7h9M1083 591.7h3M1087 591.7h3M1091 591.7h5M1097 591.7h9M1107 591.7h10M1118 591.7h8M1127 591.7h4M1132 591.7h3M1079 601.7h17M1080 603.7h14M1096 603.7h9M1084 605.7h10M1076 609.7h16M1077 613.7h3M1059 615.7h42M1059 617.7h5M1066 617.7h3M1070 617.7h20M1091 617.7h3M1059 619.7h45M1081 633.7h11M1081 635.7h10M1087 655.7h34M1094 663.7h16M1084 675.7h3M1088 675.7h83M1084 691.7h3M1059 693.7h10M1070 693.7h5M1076 693.7h4M1081 693.7h3M1085 693.7h4M1090 693.7h7M1098 693.7h4M1103 693.7h2M1059 695.7h2M1066 695.7h9M1076 695.7h6M1059 697.7h7M1067 697.7h9M1077 697.7h4M1082 697.7h3M1086 697.7h10M1097 697.7h8M1059 701.7h4M1116 713.7h5M1103 715.7h6M1110 715.7h4M1115 715.7h2M1092 719.7h5M1079 729.7h10M1079 731.7h7M1087 731.7h5M1118 733.7h5M1138 733.7h6M1079 737.7h9M1089 737.7h6M1087 741.7h5M1087 743.7h8M1087 745.7h10M1098 745.7h2M1079 753.7h6M1086 753.7h7M1085 765.7h4M1089 765.7h5M1095 765.7h6M1102 765.7h10M1112 765.7h8M1131 765.7h5M1143 771.7h1M1087 789.7h5M1093 789.7h7M1101 789.7h6M1108 789.7h8M1117 789.7h4M1122 789.7h9M1132 789.7h7M1140 789.7h6M1147 789.7h7M1089 791.7h6M1106 791.7h2M1091 805.7h4M1096 805.7h8M1105 805.7h9M1089 809.7h8M1098 809.7h2M1089 811.7h10M1093 815.7h3M1097 815.7h8M1106 815.7h2M1089 819.7h8M1098 819.7h2M1089 821.7h10M1093 825.7h6M1100 825.7h3M1104 825.7h4M1089 829.7h10M1089 831.7h10M1085 839.7h7M1093 839.7h3M1084 847.7h1M1088 847.7h4M1093 847.7h4M1098 847.7h4M1120 847.7h5M1126 847.7h6M1082 857.7h2M1089 857.7h3"/><path stroke="#ffa657" stroke-opacity="0.5" d="M1071 101.7h7M1071 103.7h13M1071 105.7h20M1071 107.7h8M1092 157.7h7M1067 225.7h7M1067 227.7h6M1067 229.7h13M1067 231.7h13M1067 233.7h18M1071 249.7h7M1071 251.7h13M1071 253.7h7M1075 311.7h6M1075 313.7h13M1075 315.7h20M1098 331.7h8M1071 531.7h9M1071 533.7h11M1071 535.7h6M1071 537.7h8M1071 539.7h9M1099 557.7h9M1093 573.7h9M1103 713.7h13M1079 719.7h13M1105 733.7h13M1125 733.7h13M1094 771.7h8M1101 793.7h8"/><path stroke="#d2a8ff" stroke-opacity="0.5" d="M1063 69.7h22M1069 169.7h25M1069 239.7h21M1069 277.7h24M1069 349.7h24M1069 413.7h21M1059 583.7h18M1069 585.7h19"/><path stroke="#8b949e" stroke-opacity="0.36" d="M1063 57.7h8M1072 57.7h5M1078 57.7h9M1088 57.7h3M1092 57.7h4M1097 57.7h3M1067 67.7h4M1072 67.7h11M1084 67.7h9M1094 67.7h3M1098 67.7h4M1103 67.7h6M1110 67.7h3M1114 67.7h9M1124 67.7h3M1128 67.7h6M1135 67.7h3M1139 67.7h11M1151 67.7h5M1157 67.7h7M1165 67.7h6M1063 91.7h9M1073 91.7h3M1077 91.7h4M1082 91.7h11M1094 91.7h4M1067 97.7h7M1075 97.7h10M1086 97.7h4M1091 97.7h2M1063 121.7h5M1069 121.7h11M1081 121.7h3M1085 121.7h5M1063 141.7h10M1074 141.7h5M1080 141.7h4M1085 141.7h5M1063 155.7h4M1068 155.7h5M1074 155.7h4M1079 155.7h8M1088 155.7h7M1096 155.7h8M1067 269.7h11M1079 269.7h4M1067 293.7h4M1072 293.7h6M1079 293.7h7M1087 293.7h4M1092 293.7h5M1098 293.7h8M1107 293.7h2M1071 297.7h8M1080 297.7h9M1090 297.7h6M1097 297.7h8M1106 297.7h8M1115 297.7h4M1120 297.7h7M1085 355.7h3M1089 355.7h3M1093 355.7h3M1097 355.7h11M1109 355.7h11M1121 355.7h6M1128 355.7h3M1067 365.7h11M1079 365.7h9M1089 365.7h11M1101 365.7h2M1067 373.7h3M1071 373.7h4M1076 373.7h9M1086 373.7h11M1098 373.7h7M1106 373.7h6M1113 373.7h3M1116 375.7h7M1124 375.7h8M1133 375.7h8M1142 375.7h7M1067 441.7h10M1078 441.7h10M1089 441.7h10M1100 441.7h4M1067 447.7h4M1072 447.7h11M1084 447.7h10M1095 447.7h7M1103 447.7h9M1113 447.7h6M1120 447.7h5M1067 465.7h3M1071 465.7h10M1082 465.7h10M1093 465.7h9M1103 465.7h4M1075 471.7h3M1079 471.7h7M1087 471.7h7M1067 497.7h8M1076 497.7h7M1084 497.7h6M1075 507.7h9M1085 507.7h5M1091 507.7h11M1103 507.7h6M1110 507.7h6M1079 515.7h9M1089 515.7h11M1101 515.7h7M1067 555.7h7M1075 555.7h8M1084 555.7h6M1091 555.7h9M1083 597.7h6M1090 597.7h5M1096 597.7h11M1108 597.7h10M1119 597.7h5M1067 625.7h1M1069 625.7h18M1067 641.7h1M1069 641.7h54M1067 651.7h1M1069 651.7h28M1067 661.7h1M1069 661.7h38M1071 669.7h1M1073 669.7h26M1067 679.7h1M1069 679.7h11M1081 679.7h1M1083 679.7h47M1067 685.7h1M1069 685.7h70M1071 705.7h8M1080 705.7h11M1092 705.7h10M1103 705.7h2M1071 763.7h8M1080 763.7h4M1085 763.7h8M1071 769.7h4M1076 769.7h3M1080 769.7h10M1091 769.7h11M1103 769.7h11M1115 769.7h5M1071 777.7h5M1077 777.7h6M1084 777.7h5M1090 777.7h9M1100 777.7h10M1111 777.7h7M1071 785.7h7M1079 785.7h6M1086 785.7h7M1144 817.7h1M1146 817.7h3M1150 817.7h8M1159 817.7h9M1169 817.7h1M1096 823.7h7M1104 823.7h4M1109 829.7h4M1114 829.7h9M1124 829.7h11M1136 829.7h6M1098 833.7h11M1110 833.7h4M1115 833.7h7M1124 833.7h6M1079 837.7h9M1089 837.7h7M1097 837.7h9M1107 837.7h9M1117 839.7h3M1121 839.7h7M1129 839.7h8M1138 839.7h2M1088 841.7h9M1098 841.7h3M1102 841.7h8M1111 841.7h5M1067 845.7h9M1077 845.7h9M1087 845.7h6M1094 845.7h3M1098 845.7h4M1098 849.7h4M1103 849.7h8M1112 849.7h11M1124 849.7h5M1130 849.7h5M1136 849.7h8M1145 849.7h7M1153 849.7h3"/><path stroke="#56d364" stroke-opacity="0.5" d="M1096 605.7h2"/></svg><div class="abs" style="left:1171px;top:57px;width:14px;height:848px;background:#0b0f15;border-left:1px solid #151a21;border-top:1px solid #151a21"></div><div class="abs" style="left:1172px;top:639px;width:13px;height:3px;background:#2a6fdb"></div></div><div id="status"><div class="abs" style="left:0;top:0;width:74px;height:22px;background:#2d333b"></div><svg class="abs" style="left:10px;top:4px" width="12" height="14" viewBox="0 0 12 14" fill="none" stroke="#e6edf3" stroke-width="1.200"><path d="M1.500 3L5.500 7.500L1.500 12M10.500 1.500L7 5.200L10.500 8.500"/></svg><div class="abs" style="left:26.5px;top:0px;height:22px;line-height:22px;white-space:nowrap;font-size:12px;color:#e6edf3;letter-spacing:0.025px;-webkit-text-stroke:0.15px;">GitHub</div><svg class="abs" style="left:82px;top:4px" width="12" height="15" viewBox="0 0 12 15" fill="none" stroke="#8b949e" stroke-width="1"><circle cx="3" cy="3" r="1.800"/><circle cx="3" cy="12" r="1.800"/><circle cx="9" cy="4.500" r="1.800"/><path d="M3 4.800v5.400M9 6.300c0 2.500 -6 1.500 -6 4"/></svg><div class="abs" style="left:99.5px;top:0px;height:22px;line-height:22px;white-space:nowrap;font-size:12px;color:#8b949e;letter-spacing:-0.002px;-webkit-text-stroke:0.15px;">main</div><svg class="abs" style="left:131px;top:0px" width="15" height="20" viewBox="0 0 15 20" fill="none" stroke="#8b949e" stroke-width="1"><path d="M1.700 9.300a5.300 5.300 0 0 1 9.700 -2.600M12.300 10.300a5.300 5.300 0 0 1 -9.700 2.600"/><path d="M11.900 3.600v3.300h-3.300M2.100 16v-3.300h3.300"/></svg><svg class="abs" style="left:161.300px;top:3.300px" width="14" height="14" viewBox="0 0 14 14" fill="none" stroke="#8b949e" stroke-width="1"><circle cx="7" cy="7" r="6"/><path d="M4.500 4.500l5 5M9.500 4.500l-5 5"/></svg><div class="abs" style="left:178.5px;top:0px;height:22px;line-height:22px;white-space:nowrap;font-size:12px;color:#8b949e;letter-spacing:-0.674px;-webkit-text-stroke:0.15px;">0</div><svg class="abs" style="left:189px;top:4px" width="14" height="14" viewBox="0 0 14 14" fill="none" stroke="#8b949e" stroke-width="1"><path d="M7 1.800L12.800 12H1.200Z"/><path d="M7 5.500v3.500M7 10v1"/></svg><div class="abs" style="left:206px;top:0px;height:22px;line-height:22px;white-space:nowrap;font-size:12px;color:#8b949e;letter-spacing:-0.674px;-webkit-text-stroke:0.15px;">0</div><div class="abs" style="left:1099px;top:3px;height:16px;line-height:16px;white-space:nowrap"><span class="jp jr" style="font-size:12px;color:#8b949e">行</span></div><div class="abs" style="left:1113.7px;top:0px;height:22px;line-height:22px;white-space:nowrap;font-size:12px;color:#8b949e;letter-spacing:-0.440px;-webkit-text-stroke:0.15px;">345</div><div class="abs" style="left:1132.3px;top:3px;height:16px;line-height:16px;white-space:nowrap"><span class="jp jr" style="font-size:12px;color:#8b949e">、</span></div><div class="abs" style="left:1145.3px;top:3px;height:16px;line-height:16px;white-space:nowrap"><span class="jp jr" style="font-size:12px;color:#8b949e">列</span></div><div class="abs" style="left:1161.3px;top:0px;height:22px;line-height:22px;white-space:nowrap;font-size:12px;color:#8b949e;letter-spacing:-0.474px;-webkit-text-stroke:0.15px;">1</div><div class="abs" style="left:1183.5px;top:3px;height:16px;line-height:16px;white-space:nowrap"><span class="jp jr" style="font-size:12px;color:#8b949e;letter-spacing:-1px">スペース</span></div><div class="abs" style="left:1228.8px;top:0px;height:22px;line-height:22px;white-space:nowrap;font-size:12px;color:#8b949e;letter-spacing:-0.334px;-webkit-text-stroke:0.15px;">:</div><div class="abs" style="left:1235.2px;top:0px;height:22px;line-height:22px;white-space:nowrap;font-size:12px;color:#8b949e;letter-spacing:-0.474px;-webkit-text-stroke:0.15px;">4</div><div class="abs" style="left:1258.3px;top:0px;height:22px;line-height:22px;white-space:nowrap;font-size:12px;color:#8b949e;letter-spacing:-0.539px;-webkit-text-stroke:0.15px;">UTF-8</div><div class="abs" style="left:1306.5px;top:0px;height:22px;line-height:22px;white-space:nowrap;font-size:12px;color:#8b949e;letter-spacing:-1.502px;-webkit-text-stroke:0.15px;">LF</div><svg class="abs" style="left:1334px;top:4px" width="15" height="14" viewBox="0 0 15 14" fill="none" stroke="#8b949e" stroke-width="1.100"><path d="M4.500 1.500c-1.800 0 -1.800 .8 -1.800 2.200s0 2.600 -1.500 2.800c1.500 .2 1.500 1.400 1.500 2.800s0 2.200 1.800 2.200"/><path d="M8.500 1.500c1.800 0 1.800 .8 1.800 2.200s0 2.300 1 2.800"/><circle cx="10.500" cy="10.300" r="2.300" fill="#8b949e" stroke="none"/></svg><div class="abs" style="left:1353.8px;top:0px;height:22px;line-height:22px;white-space:nowrap;font-size:12px;color:#8b949e;letter-spacing:-0.127px;-webkit-text-stroke:0.15px;">Python</div><div class="abs" style="left:1408px;top:3px;height:16px;line-height:16px;white-space:nowrap"><span class="jp jr" style="font-size:12px;color:#8b949e;letter-spacing:-0.9px">レイアウト</span></div><div class="abs" style="left:1465.8px;top:0px;height:22px;line-height:22px;white-space:nowrap;font-size:12px;color:#8b949e;letter-spacing:-0.334px;-webkit-text-stroke:0.15px;">:</div><div class="abs" style="left:1473px;top:0px;height:22px;line-height:22px;white-space:nowrap;font-size:12px;color:#8b949e;letter-spacing:-1.685px;-webkit-text-stroke:0.15px;">US</div><svg class="abs" style="left:1503px;top:4px" width="14" height="14" viewBox="0 0 14 14" fill="none" stroke="#8b949e" stroke-width="1.100"><path d="M7 1.300c-2.500 0 -4 1.800 -4 4.200v3.500l-1.300 1.700h10.600l-1.300 -1.700v-3.500c0 -2.400 -1.500 -4.200 -4 -4.200z"/><path d="M5.600 11.500a1.500 1.500 0 0 0 2.800 0"/></svg></div></body></html>
